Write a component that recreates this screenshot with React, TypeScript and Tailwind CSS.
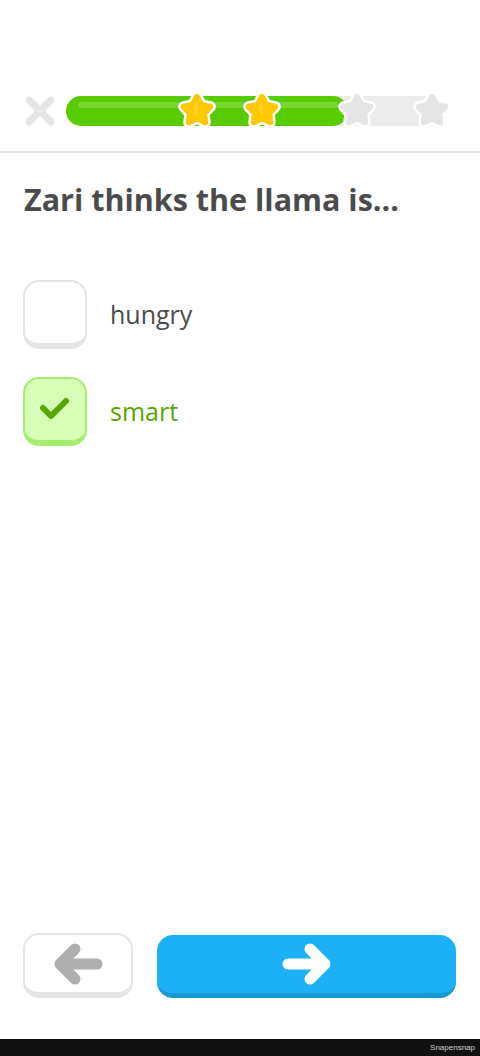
import React from "react";

const STAR =
  "M20 7 L24.41 14.93 L33.32 16.67 L27.13 23.32 L28.23 32.33 L20 28.5 L11.77 32.33 L12.87 23.32 L6.68 16.67 L15.59 14.93 Z";

function Star({ color, left, gold }: { color: string; left: number; gold?: boolean }) {
  return (
    <svg
      width="42"
      height="42"
      viewBox="-1 0 42 42"
      className="absolute top-1/2 -translate-y-1/2"
      style={{ left: left - 21 }}
    >
      <path d={STAR} fill="#fff" stroke="#fff" strokeWidth="11" strokeLinejoin="round" />
      <path d={STAR} fill={color} stroke={color} strokeWidth="6" strokeLinejoin="round" />
      {gold && (
        <path d="M17 19 L20 13 L20 24 Z" fill="#ffd93d" stroke="#ffd93d" strokeWidth="1.5" strokeLinejoin="round" opacity="0.8" />
      )}
    </svg>
  );
}

function Option({ label, checked }: { label: string; checked?: boolean }) {
  return (
    <div className="flex items-center">
      <div
        className={
          checked
            ? "w-16 h-[69px] rounded-[16px] border-2 border-b-[6px] border-[#a5ed6e] bg-[#d7ffb8] flex items-center justify-center"
            : "w-16 h-[69px] rounded-[16px] border-2 border-b-[6px] border-[#e5e5e5] bg-white"
        }
      >
        {checked && (
          <svg width="60" height="61" viewBox="0 0 60 61">
            <path
              d="M18 29 L26 37 L41 22"
              fill="none"
              stroke="#58a700"
              strokeWidth="6"
              strokeLinecap="round"
              strokeLinejoin="round"
            />
          </svg>
        )}
      </div>
      <span
        className={
          "ml-[23px] text-[25px] leading-none " + (checked ? "text-[#58a700]" : "text-[#4b4b4b]")
        }
        style={{ fontFamily: '"Open Sans", sans-serif' }}
      >
        {label}
      </span>
    </div>
  );
}

export default function App() {
  return (
    <div
      className="h-[1056px] w-[480px] flex flex-col bg-white overflow-hidden"
      style={{ fontFamily: '"Open Sans", sans-serif' }}
    >
      <div className="pt-[91px] h-[131px] flex items-center pl-[24px]">
        <svg width="32" height="32" viewBox="0 0 32 32">
          <path
            d="M5 5 L27 27 M27 5 L5 27"
            stroke="#e5e5e5"
            strokeWidth="7"
            strokeLinecap="round"
          />
        </svg>
        <div className="relative ml-[10px] w-[374px] h-[30px] rounded-full bg-[#ececec]">
          <div className="absolute left-0 top-0 h-full w-[282px] rounded-full bg-[#58cc02]">
            <div className="absolute left-[12px] right-[10px] top-[6px] h-[6px] rounded-full bg-[#79d634]" />
          </div>
          <Star color="#ffc800" left={131} gold />
          <Star color="#ffc800" left={196} gold />
          <Star color="#e5e5e5" left={291} />
          <Star color="#e5e5e5" left={366} />
        </div>
      </div>
      <div className="mt-[20px] h-[2px] bg-[#e5e5e5]" />
      <h1 className="mt-[28px] px-[24px] text-[30.5px] leading-[36px] font-bold text-[#4b4b4b]">
        Zari thinks the llama is...
      </h1>
      <div className="mt-[63px] px-[23px] flex flex-col gap-[28px]">
        <Option label="hungry" />
        <Option label="smart" checked />
      </div>
      <div className="flex-1" />
      <div className="flex pl-[23px] pr-[24px] gap-[24px]">
        <div className="w-[110px] h-[65px] rounded-[16px] border-2 border-b-[6px] border-[#e5e5e5] bg-white flex items-center justify-center">
          <svg width="54" height="44" viewBox="0 0 54 44">
            <path
              d="M46 22 L9 22 M24 7 L9 22 L24 37"
              fill="none"
              stroke="#afafaf"
              strokeWidth="11"
              strokeLinecap="round"
              strokeLinejoin="round"
            />
          </svg>
        </div>
        <div className="flex-1 h-[63px] mt-[2px] rounded-[16px] border-b-[5px] border-[#1899d6] bg-[#1cb0f6] flex items-center justify-center">
          <svg width="54" height="44" viewBox="0 0 54 44">
            <path
              d="M8 22 L45 22 M30 7 L45 22 L30 37"
              fill="none"
              stroke="#ffffff"
              strokeWidth="11"
              strokeLinecap="round"
              strokeLinejoin="round"
            />
          </svg>
        </div>
      </div>
      <div className="h-[41px]" />
      <div className="h-[17px] bg-[#111111] flex items-center justify-end pr-[5px]">
        <span className="text-[8px] text-[#d0d0d0]" style={{ fontFamily: '"Liberation Sans", sans-serif' }}>
          Snapensnap
        </span>
      </div>
    </div>
  );
}
